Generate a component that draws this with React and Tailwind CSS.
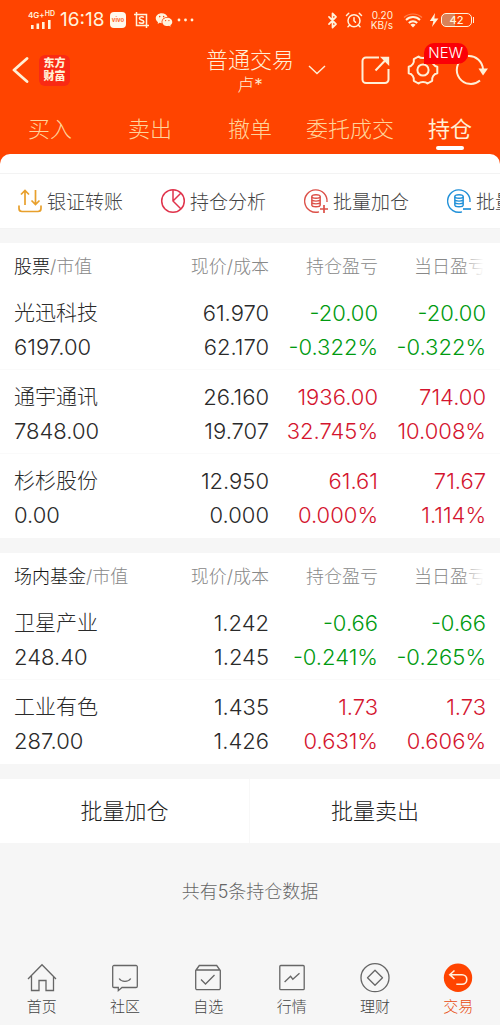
import { AlarmClock, Bluetooth } from "lucide-react";
import { RiWechatFill } from "react-icons/ri";

const tabs = ["买入", "卖出", "撤单", "委托成交", "持仓"];

const stocks = [
  {
    name: "光迅科技",
    value: "6197.00",
    price: "61.970",
    cost: "62.170",
    total: ["-20.00", "-0.322%"],
    today: ["-20.00", "-0.322%"],
  },
  {
    name: "通宇通讯",
    value: "7848.00",
    price: "26.160",
    cost: "19.707",
    total: ["1936.00", "32.745%"],
    today: ["714.00", "10.008%"],
  },
  {
    name: "杉杉股份",
    value: "0.00",
    price: "12.950",
    cost: "0.000",
    total: ["61.61", "0.000%"],
    today: ["71.67", "1.114%"],
  },
];

const funds = [
  {
    name: "卫星产业",
    value: "248.40",
    price: "1.242",
    cost: "1.245",
    total: ["-0.66", "-0.241%"],
    today: ["-0.66", "-0.265%"],
  },
  {
    name: "工业有色",
    value: "287.00",
    price: "1.435",
    cost: "1.426",
    total: ["1.73", "0.631%"],
    today: ["1.73", "0.606%"],
  },
];

// status bar
const StatusBar = () => (
  <div className="flex h-10 items-center justify-between pl-7 pr-7 text-[#fff3dc]">
    <div className="flex items-center">
      <div className="flex w-8 flex-col gap-px">
        <span className="flex text-[8px] leading-[8px] font-semibold whitespace-nowrap">
          4G+<span className="text-[7px] leading-[6px]">HD</span>
        </span>
        <svg width="24" height="9" viewBox="0 0 24 9" fill="currentColor">
          <rect x="3" y="5" width="2.6" height="4" />
          <rect x="8.5" y="3.5" width="2.6" height="5.5" />
          <rect x="14" y="2" width="2.6" height="7" />
          <rect x="20" y="0" width="2.6" height="9" />
        </svg>
      </div>
      <span className="w-[50px] text-[19px] leading-6 font-normal">16:18</span>
      <span className="flex h-4 w-4 items-center justify-center rounded bg-[#fff8ec] text-[6px] leading-none font-bold text-[#ff6a30]">
        vivo
      </span>
      <svg
        className="ml-2"
        width="15"
        height="16"
        viewBox="0 0 15 16"
        fill="none"
        stroke="currentColor"
        strokeWidth="1.5"
      >
        <path d="M0 2.5H12.5V16M2.5 0V13.5H15" />
        <path d="M9.8 5.6C9 4.6 5.4 4.4 5.4 6.3C5.4 8.4 9.8 7.4 9.8 9.7C9.8 11.8 6 11.6 5 10.3" />
      </svg>
      <RiWechatFill className="ml-1.5 h-[18px] w-[18px]" />
      <svg className="ml-1" width="18" height="4" viewBox="0 0 18 4" fill="currentColor">
        <circle cx="2" cy="2" r="1.4" />
        <circle cx="8.5" cy="2" r="1.4" />
        <circle cx="15" cy="2" r="1.4" />
      </svg>
    </div>
    <div className="flex items-center">
      <Bluetooth className="h-[17px] w-[17px]" strokeWidth={2.4} />
      <AlarmClock className="ml-1 h-[18px] w-[18px]" strokeWidth={2} />
      <span className="mx-1.5 w-6 text-right text-[10px] leading-[10px] font-normal">
        0.20 KB/s
      </span>
      <svg className="ml-1" width="20" height="15" viewBox="0 0 20 15" fill="none" stroke="currentColor">
        <path d="M1 4.5C6 -.2 14 -.2 19 4.5" strokeWidth="1.2" opacity=".35" />
        <path d="M3 7C7 3 13 3 17 7" strokeWidth="1.9" />
        <path d="M5.8 10C8.2 7.6 11.8 7.6 14.2 10" strokeWidth="1.9" />
        <path d="M7.4 11.8C8.9 10.5 11.1 10.5 12.6 11.8L10 14.6Z" fill="currentColor" stroke="none" />
      </svg>
      <svg className="ml-1.5" width="10" height="14" viewBox="0 0 10 14" fill="currentColor">
        <path d="M6 0L.8 8H4.4L3 14L9.4 5.6H5.4Z" />
      </svg>
      <span className="relative ml-0.5 flex h-[14px] w-[31px] items-center justify-center rounded-[5px] border border-current bg-linear-to-r from-[#d98258] from-45% to-transparent to-45% text-[11px] leading-none font-medium">
        42
        <i className="absolute -right-[3px] h-1.5 w-px bg-current" />
      </span>
    </div>
  </div>
);

const Header = () => (
  <header className="grid h-[60px] grid-cols-[1fr_auto_1fr] items-center text-[#fff0d6]">
    <div className="flex items-center pl-3">
      <button type="button" aria-label="返回">
        <svg width="17" height="26" viewBox="0 0 17 26" fill="none" stroke="currentColor" strokeWidth="2.8">
          <path d="M15 1.5L2 13L15 24.5" strokeLinecap="round" strokeLinejoin="round" />
        </svg>
      </button>
      <span className="ml-[10px] flex h-[31px] w-[31px] items-center justify-center rounded-md bg-[#f92a14] text-center text-[11px] leading-[13px] font-black">
        东方
        <br />
        财富
      </span>
    </div>
    <div className="pt-1 text-center">
      <h1 className="text-[22px] leading-[26px]">普通交易</h1>
      <p className="text-[17px] leading-6">卢*</p>
    </div>
    <div className="flex items-center justify-between pl-[14px] pr-3">
      <button type="button" aria-label="切换账户">
        <svg width="18" height="10" viewBox="0 0 18 10" fill="none" stroke="currentColor" strokeWidth="1.4">
          <path d="M1 1L9 8.5L17 1" />
        </svg>
      </button>
      <button type="button" aria-label="分享" className="ml-5">
        <svg width="30" height="30" viewBox="0 0 30 30" fill="none" stroke="currentColor" strokeWidth="2">
          <path d="M18 2.5H5A3.5 3.5 0 0 0 1.5 6V24.5A3.5 3.5 0 0 0 5 28H24A3.5 3.5 0 0 0 27.5 24.5V14" />
          <path d="M14.5 15.5L26 3.5" />
          <path d="M19 1.8H28.2V11Z" fill="currentColor" stroke="none" />
        </svg>
      </button>
      <button type="button" aria-label="设置" className="relative">
        <svg width="32" height="32" viewBox="0 0 32 32" fill="none" stroke="currentColor" strokeWidth="2">
          <path
            strokeLinejoin="round"
            d="M11.5 2.5C13.5 4.6 18.5 4.6 20.5 2.5L25.2 5.2C24.6 8.5 26.7 12 30.3 12.7V19.3C26.7 20 24.6 23.5 25.2 26.8L20.5 29.5C18.5 27.4 13.5 27.4 11.5 29.5L6.8 26.8C7.4 23.5 5.3 20 1.7 19.3V12.7C5.3 12 7.4 8.5 6.8 5.2Z"
          />
          <circle cx="16" cy="16" r="5.6" />
        </svg>
        <span className="absolute -top-[11px] left-[17px] z-10 flex h-[21px] w-11 items-center justify-center rounded-[10px] rounded-bl-none bg-[#fb0007] text-[15px] text-white">
          NEW
        </span>
      </button>
      <button type="button" aria-label="刷新">
        <svg width="34" height="32" viewBox="0 0 34 32" fill="none" stroke="currentColor" strokeWidth="2">
          <path d="M9.5 4A14 14 0 1 0 26 26.5" />
          <path d="M14 2A14 14 0 0 1 29 15" />
          <path d="M24.5 14.5H34L29 21.5Z" fill="currentColor" stroke="none" />
        </svg>
      </button>
    </div>
  </header>
);

const Tabs = () => (
  <nav className="flex h-[54px] pt-3">
    {tabs.map((tab) => (
      <a
        key={tab}
        href="#"
        className={
          tab === "持仓"
            ? "flex flex-1 flex-col items-center text-[22px] leading-[34px] font-normal text-[#fff0d6]"
            : "flex flex-1 flex-col items-center text-[22px] leading-[34px] text-[#ffd49b]"
        }
      >
        {tab}
        {tab === "持仓" && <span className="h-1 w-7 rounded-full bg-white" />}
      </a>
    ))}
  </nav>
);

const TransferIcon = () => (
  <svg width="26" height="26" viewBox="0 0 26 26" fill="none" stroke="#e8a02c" strokeWidth="1.7">
    <path d="M2 18V20.5A3 3 0 0 0 5 23.5H21A3 3 0 0 0 24 20.5V18" strokeLinecap="round" />
    <path d="M8 17V3M4 6.5L8 2.5L12 6.5M18.5 2V16M14.5 12.5L18.5 16.5L22.5 12.5" />
  </svg>
);

const PieIcon = () => (
  <svg width="26" height="26" viewBox="0 0 26 26" fill="none" stroke="#e0344c" strokeWidth="1.5">
    <circle cx="13" cy="13" r="11.3" />
    <path d="M13 2V13L21 21M13 13L21 5" />
  </svg>
);

const CoinsIcon = ({ color, plus }) => (
  <svg width="26" height="26" viewBox="0 0 26 26" fill="none" stroke={color} strokeWidth="1.4">
    <path d="M16 23.8A11.2 11.2 0 1 1 24 14" />
    <ellipse cx="13" cy="8.5" rx="4.2" ry="1.8" />
    <path d="M8.8 8.5V17C8.8 19.4 17.2 19.4 17.2 17V8.5M8.8 11.3C8.8 13.7 17.2 13.7 17.2 11.3M8.8 14.1C8.8 16.5 17.2 16.5 17.2 14.1" />
    <path d={plus ? "M17 21H25M21 17V25" : "M17 21H25"} strokeWidth="1.7" />
  </svg>
);

const Toolbar = () => (
  <div className="flex h-14 gap-[37px] overflow-hidden border-y border-[#f3f3f3] pl-[17px] text-[19px] text-[#444]">
    {[
      { icon: <TransferIcon />, label: "银证转账" },
      { icon: <PieIcon />, label: "持仓分析" },
      { icon: <CoinsIcon color="#dc5048" plus />, label: "批量加仓" },
      { icon: <CoinsIcon color="#2090d8" />, label: "批量卖出" },
    ].map(({ icon, label }) => (
      <button
        key={label}
        type="button"
        className="flex shrink-0 items-center gap-1 whitespace-nowrap"
      >
        {icon}
        <span className="pt-1">{label}</span>
      </button>
    ))}
  </div>
);

// red for gains, green for losses
const ProfitCell = ({ lines, className }) => (
  <td
    className={`${className} ${
      lines[0].startsWith("-") ? "text-[#009a10]" : "text-[#d4142e]"
    }`}
  >
    <div>{lines[0]}</div>
    <div>{lines[1]}</div>
  </td>
);

const HoldingsTable = ({ title, rows }) => (
  <table className="w-full table-fixed bg-white">
    <colgroup>
      <col />
      <col className="w-[110px]" />
      <col className="w-[109px]" />
      <col className="w-[122px]" />
    </colgroup>
    <thead>
      <tr className="h-[43px] text-right text-[18px] leading-[27px] whitespace-nowrap text-[#888]">
        <th className="pl-[14px] pt-1 text-left font-light">
          <span className="text-[#111]">{title}</span>/市值
        </th>
        <th className="pt-1 font-light">现价/成本</th>
        <th className="pt-1 font-light">持仓盈亏</th>
        <th className="relative pt-1 pr-[14px] font-light">
          当日盈亏
          <span className="absolute inset-y-0 right-[14px] w-6 bg-linear-to-r from-transparent to-white to-90%" />
        </th>
      </tr>
    </thead>
    <tbody className="text-right text-[22px] leading-[34px] text-[#2a2a2a]">
      {rows.map((row) => (
        <tr key={row.name} className="border-b border-[#fafafa] last:border-white">
          <td className="pt-[10px] pb-[5px] pl-[14px] text-left">
            <div className="text-[21px]">{row.name}</div>
            <div>{row.value}</div>
          </td>
          <td className="pt-[10px] pb-[5px]">
            <div>{row.price}</div>
            <div>{row.cost}</div>
          </td>
          <ProfitCell lines={row.total} className="pt-[10px] pb-[5px]" />
          <ProfitCell lines={row.today} className="pt-[10px] pb-[5px] pr-[14px]" />
        </tr>
      ))}
    </tbody>
  </table>
);

const navItems = [
  {
    label: "首页",
    icon: <path d="M1 16L15 1.8L29 16M4.5 13V27.5H12V17.5H19V27.5H26.5V13" />,
  },
  {
    label: "社区",
    icon: (
      <>
        <path d="M4 2.5H26A1.3 1.3 0 0 1 27.3 3.8V23.2A1.3 1.3 0 0 1 26 24.5H12L8.3 27.7V24.5H4A1.3 1.3 0 0 1 2.7 23.2V3.8A1.3 1.3 0 0 1 4 2.5Z" />
        <path d="M9.2 15.5C11.5 19.3 18.3 19.3 20.7 15.5" />
      </>
    ),
  },
  {
    label: "自选",
    icon: (
      <>
        <path d="M2.7 7.5L6.3 2.5H23.7L27.3 7.5V25.2A1.5 1.5 0 0 1 25.8 26.7H4.2A1.5 1.5 0 0 1 2.7 25.2ZM2.7 7H27.3" />
        <path d="M8 16.5L12.5 21L21.5 12" />
      </>
    ),
  },
  {
    label: "行情",
    icon: (
      <>
        <rect x="2.8" y="2.5" width="24.4" height="24.2" rx="1" />
        <path d="M7.6 19L13.6 13.3L15.8 16.2L22.5 10.3" />
      </>
    ),
  },
  {
    label: "理财",
    icon: (
      <>
        <circle cx="15" cy="14.7" r="14" />
        <path d="M15 7.2L22.5 14.7L15 22.2L7.5 14.7Z" strokeLinejoin="round" />
      </>
    ),
  },
  {
    label: "交易",
    active: true,
    icon: (
      <>
        <circle cx="15" cy="14.7" r="14.2" fill="#ff4400" stroke="none" />
        <path
          d="M11.5 7.5L6.8 11.7L11.5 16M6.8 11.7H19A4.8 4.8 0 0 1 19 21.3H13.3"
          stroke="#fff0dc"
          strokeWidth="1.6"
        />
      </>
    ),
  },
];

const BottomNav = () => (
  <nav className="mt-auto flex pb-2">
    {navItems.map(({ label, icon, active }) => (
      <a
        key={label}
        href="#"
        className={
          active
            ? "flex flex-1 flex-col items-center gap-1 text-[15px] leading-5 text-[#e8480c]"
            : "flex flex-1 flex-col items-center gap-1 text-[15px] leading-5 text-[#444]"
        }
      >
        <svg width="30" height="30" viewBox="0 0 30 30" fill="none" stroke="#666" strokeWidth="1.3">
          {icon}
        </svg>
        {label}
      </a>
    ))}
  </nav>
);

export default function App() {
  return (
    <div
      lang="zh-CN"
      className="flex min-h-screen flex-col bg-[#f6f6f6] font-['Inter','Noto_Sans_CJK_SC',sans-serif] font-light"
    >
      <div className="bg-[#ff4400]">
        <StatusBar />
        <Header />
        <Tabs />
        <div className="h-[19px] rounded-t-[10px] bg-white" />
      </div>
      <main>
        <div className="bg-white">
          <Toolbar />
        </div>
        <div className="mt-[14px] flex flex-col gap-[15px]">
          <HoldingsTable title="股票" rows={stocks} />
          <HoldingsTable title="场内基金" rows={funds} />
          <div className="grid h-16 grid-cols-2 divide-x divide-[#f8f8f8] bg-white text-[22px] text-[#222]">
            <button type="button">批量加仓</button>
            <button type="button">批量卖出</button>
          </div>
        </div>
        <p className="pt-9 text-center text-[18px] leading-[26px] text-[#666]">
          共有5条持仓数据
        </p>
      </main>
      <BottomNav />
    </div>
  );
}
